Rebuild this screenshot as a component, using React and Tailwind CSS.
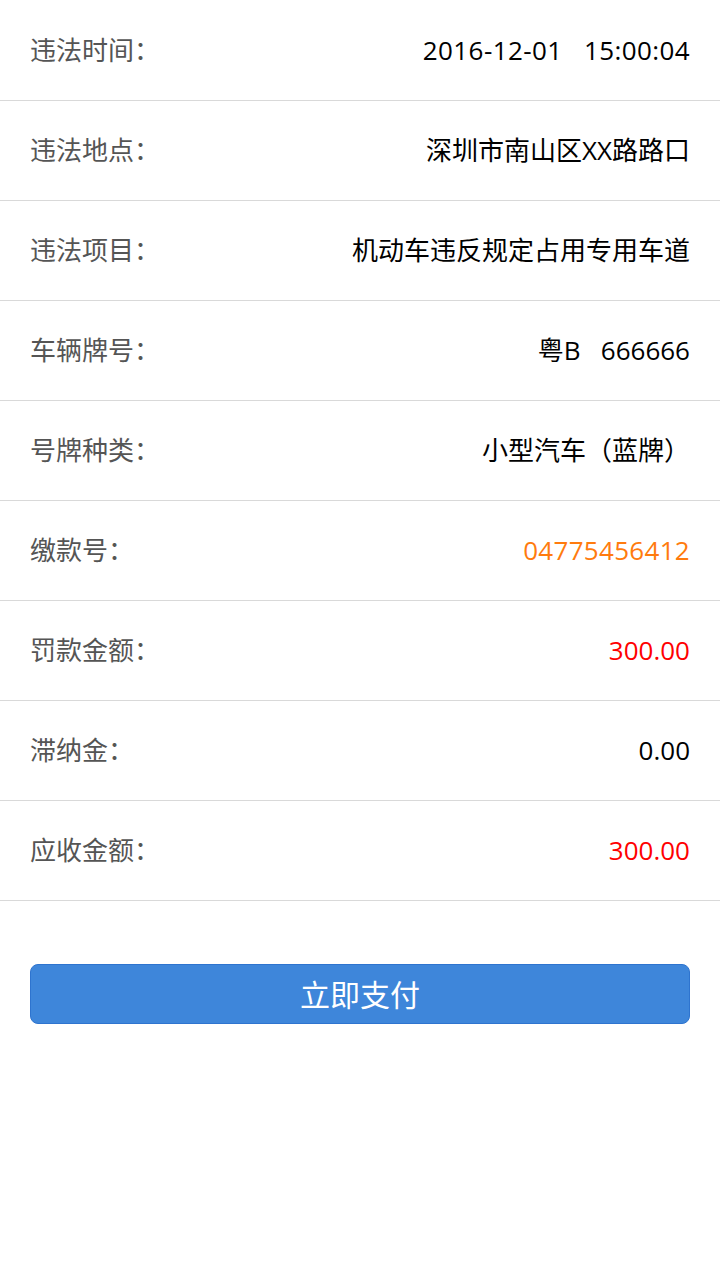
import React from 'react';

const rows = [
  { label: '违法时间：', value: '2016-12-01\u00a0\u00a0\u00a015:00:04', color: 'text-black tracking-[0.4px]' },
  { label: '违法地点：', value: '深圳市南山区XX路路口', color: 'text-black' },
  { label: '违法项目：', value: '机动车违反规定占用专用车道', color: 'text-black' },
  { label: '车辆牌号：', value: '粤B\u00a0\u00a0\u00a0666666', color: 'text-black' },
  { label: '号牌种类：', value: '小型汽车（蓝牌）', color: 'text-black' },
  { label: '缴款号：', value: '04775456412', color: 'text-[#ff7b0e] tracking-[0.3px]' },
  { label: '罚款金额：', value: '300.00', color: 'text-[#ff0000]' },
  { label: '滞纳金：', value: '0.00', color: 'text-black' },
  { label: '应收金额：', value: '300.00', color: 'text-[#ff0000]' },
];

export default function App() {
  return (
    <div
      className="min-h-[1280px] w-[720px] bg-white pt-px"
      style={{ fontFamily: '"Open Sans", "Noto Sans CJK SC", sans-serif' }}
    >
      {rows.map((row) => (
        <div
          key={row.label}
          className="flex h-[100px] items-center justify-between border-b border-[#d9d9d9] px-[30px] text-[26px]"
        >
          <span className="text-[#555555]">{row.label}</span>
          <span className={row.color}>{row.value}</span>
        </div>
      ))}
      <div className="px-[30px] pt-[63px]">
        <button className="flex h-[60px] w-full items-center justify-center rounded-[8px] border border-[#2e74cf] bg-[#3e86da] text-[30px] text-white">
          立即支付
        </button>
      </div>
    </div>
  );
}
